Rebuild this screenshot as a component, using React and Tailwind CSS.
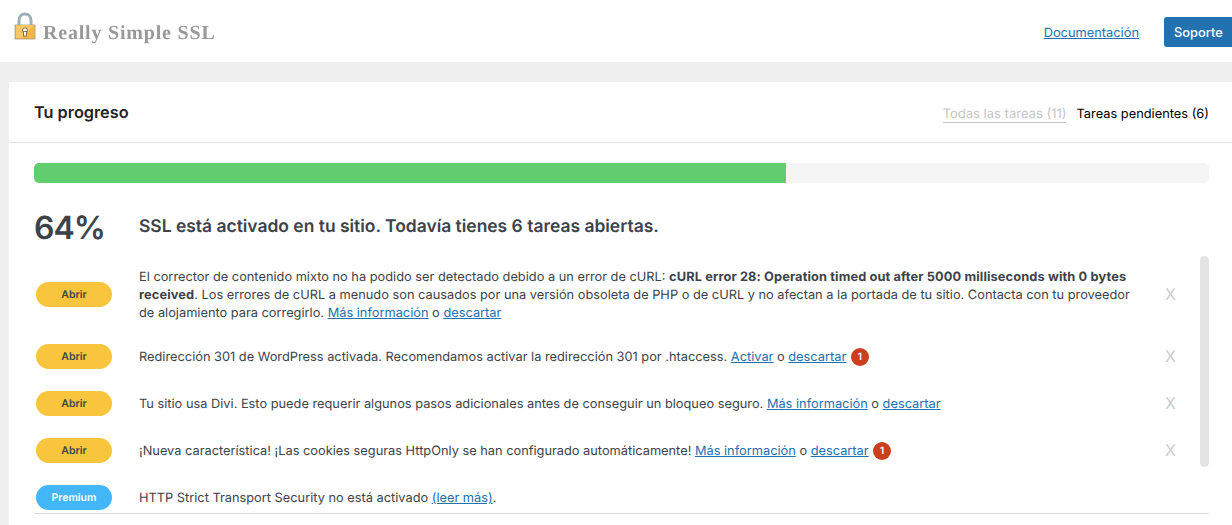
import React from 'react';

const Link = ({ children }) => <a href="#" className="text-[#2271b1] underline">{children}</a>;

const Badge = () => <span className="inline-flex w-[18px] h-[18px] -my-1 ml-[1px] align-[1px] items-center justify-center rounded-full bg-[#cc3f1d] text-white text-[10px] font-semibold">1</span>;

const tasks = [
  {
    label: 'Abrir',
    body: <>
        El corrector de contenido mixto no ha podido ser detectado debido a un error de cURL: <b className="font-bold tracking-[0.12px]">cURL error 28: Operation timed out after 5000 milliseconds with 0 bytes received</b>. Los errores de cURL a menudo son causados por una versión obsoleta de PHP o de cURL y no afectan a la portada de tu sitio. Contacta con tu proveedor de alojamiento para corregirlo. <Link>Más información</Link> o <Link>descartar</Link>
      </>
  },
  {
    label: 'Abrir',
    body: <>
        Redirección 301 de WordPress activada. Recomendamos activar la redirección 301 por .htaccess. <Link>Activar</Link> o <Link>descartar</Link> <Badge />
      </>
  },
  {
    label: 'Abrir',
    body: <>
        Tu sitio usa Divi. Esto puede requerir algunos pasos adicionales antes de conseguir un bloqueo seguro. <Link>Más información</Link> o <Link>descartar</Link>
      </>
  },
  {
    label: 'Abrir',
    body: <>
        ¡Nueva característica! ¡Las cookies seguras HttpOnly se han configurado automáticamente! <Link>Más información</Link> o <Link>descartar</Link> <Badge />
      </>
  },
  {
    label: 'Premium',
    body: <>
        HTTP Strict Transport Security no está activado <Link>(leer más)</Link>.
      </>
  }
];

function Lock() {
  return <svg width="22" height="28" viewBox="0 0 22 28" className="shrink-0">
      <path d="M5 14V8.5C5 4.5 7.5 2 11 2s6 2.5 6 6.5V14" fill="none" stroke="#9fb0b8" strokeWidth="3" />
      <rect x="1" y="13" width="20" height="14" fill="#f5b544" stroke="#a89a80" strokeWidth="0.8" />
      <path d="M2 13h18l-12 13H2z" fill="#f9c766" />
      <circle cx="11" cy="18.5" r="2.6" fill="#fff" stroke="#6d5a3a" strokeWidth="0.8" />
      <rect x="9.6" y="19.5" width="2.8" height="4.5" fill="#fff" stroke="#6d5a3a" strokeWidth="0.8" />
    </svg>;
}

export default function App() {
  return <div className="h-[525px] overflow-hidden bg-[#f0f0f0] font-['Inter',sans-serif] [text-rendering:geometricPrecision] text-[12.83px] text-[#333]">
      <header className="h-[62px] bg-white flex items-center pl-[14px] pt-[2px]">
        <div className="flex items-center gap-[7px] -mt-[13px]">
          <Lock />
          <span className="font-['Liberation_Serif',serif] font-bold text-[20px] tracking-[0.8px] text-[#999] mt-[15px] blur-[0.5px]">Really Simple SSL</span>
        </div>
        <a href="#" className="ml-auto mt-[4px] text-[#2271b1] underline">Documentación</a>
        <button className="ml-[25px] h-[30px] w-[68px] pl-[10px] pt-px text-left rounded-l-[3px] bg-[#2271b1] text-white font-medium">Soporte</button>
      </header>

      <main className="mt-[20px] ml-[9px] h-[443px] bg-white">
        <div className="h-[61px] border-b border-[#e2e2e2] flex items-center justify-between pl-[25px] pr-[23px]">
          <h1 className="text-[16.3px] font-semibold text-[#1d2327]">Tu progreso</h1>
          <div className="flex gap-[10px] mt-[4px]">
            <span className="text-[13px] text-[#c6c6c6] border-b border-[#c6c6c6] leading-[16px]">Todas las tareas (11)</span>
            <span className="pt-px text-black leading-[16px]">Tareas pendientes (6)</span>
          </div>
        </div>

        <div className="pl-[25px] pr-[23px]">
          <div className="mt-[20px] h-[20px] rounded-[5px] bg-[#f5f5f5] overflow-hidden">
            <div className="h-full w-[64%] bg-[#61ce70]" />
          </div>

          <div className="mt-[26px] flex items-center h-[36px]">
            <span className="w-[105px] pt-[2px] text-[32px] tracking-[-1px] font-semibold text-[#3c434a]">64%</span>
            <span className="text-[17.45px] font-semibold text-[#3c434a]">SSL está activado en tu sitio. Todavía tienes 6 tareas abiertas.</span>
          </div>

          <div className="mt-[11px] h-[258px] border-b border-[#dddddd] flex overflow-hidden">
            <div className="flex-1 pt-[11px] flex flex-col gap-[22px]">
              {tasks.map((t, i) => <div key={i} className="flex items-center min-h-[25px]">
                  <span className={`ml-[2px] w-[76px] h-[25px] shrink-0 rounded-full flex items-center justify-center text-[10.5px] font-semibold ${t.label === 'Premium' ? 'bg-[#42b6f9] text-white' : 'bg-[#f9c53c] text-[#444]'}`}>{t.label}</span>
                  <p className="ml-[27px] pt-[2px] -mb-px flex-1 text-[12.8px] leading-[18px] text-[#3c434a]">{t.body}</p>
                  {t.label === 'Abrir' && <span className="w-[10px] ml-[26px] mr-[25px] mb-px text-[16px] text-[#ccc] text-center">X</span>}
                  {t.label !== 'Abrir' && <span className="w-[10px] ml-[26px] mr-[25px]" />}
                </div>)}
            </div>
            <div className="w-[9px] h-[211px] rounded-full bg-[#e4e4e4] shrink-0" />
          </div>
        </div>
      </main>
    </div>;
}
